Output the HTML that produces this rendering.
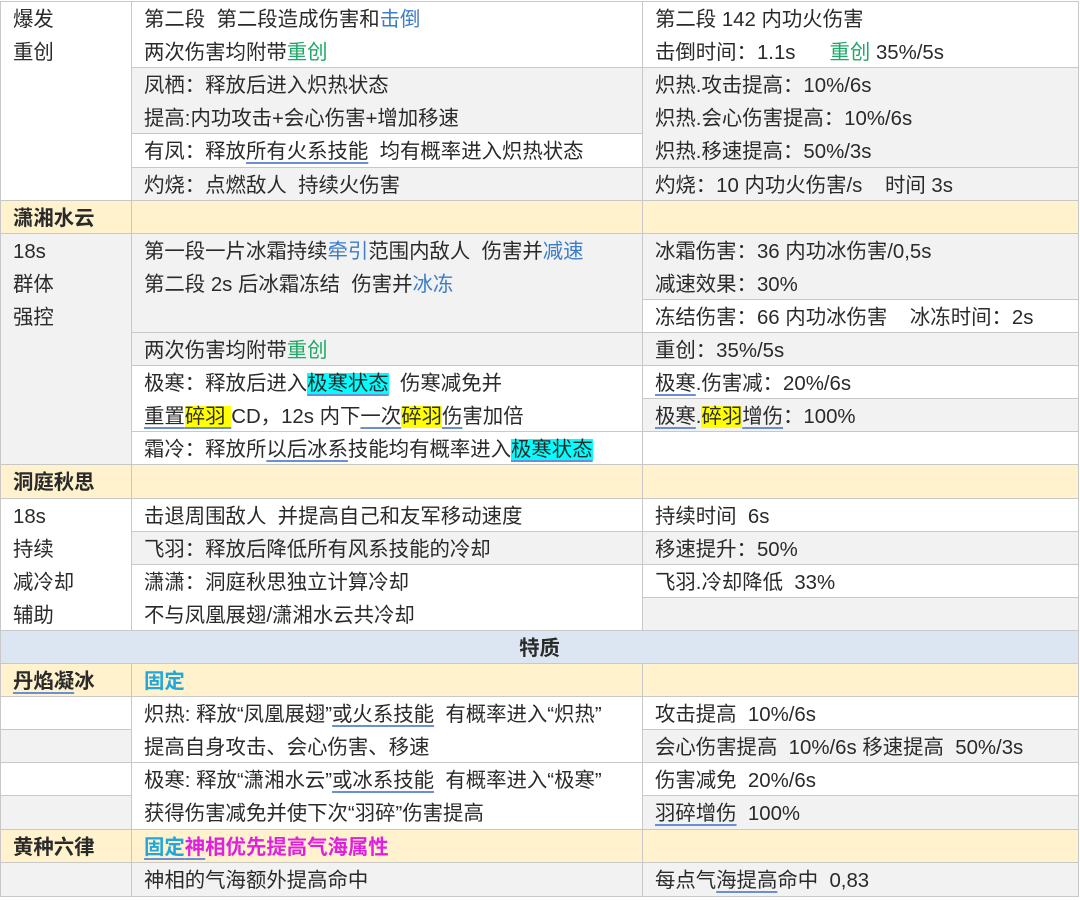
<!DOCTYPE html>
<html><head><meta charset="utf-8"><style>
body{margin:0;width:1080px;height:900px;background:#fff;position:relative;overflow:hidden;font-family:"Liberation Sans","Noto Sans CJK SC",sans-serif;font-size:20.4px;color:#2a2a2a}
.c{position:absolute;box-sizing:border-box;border-right:1px solid #c8c8c8;border-bottom:1px solid #c8c8c8;padding-left:12px;padding-top:2px;line-height:33px;white-space:nowrap;overflow:hidden}
.w{background:#fff}.g{background:#f2f2f2}.y{background:#fff2cc}.b{background:#dce6f2}
.c1{left:0;width:132px;border-left:1px solid #c8c8c8}
.c2{left:132px;width:511px}
.c3{left:643px;width:436px}
.bd{font-weight:bold}
.bl{color:#3d7cc9}.gr{color:#1fa866}
.u{text-decoration:underline;text-decoration-color:#6b8fd6;text-underline-offset:4px}
.cy{background:#00ffff}.ye{background:#ffff00}
.fx{color:#22a7dd;font-weight:bold}.mg{color:#e020e0;font-weight:bold}
</style></head><body>
<div style="position:absolute;left:0;top:1px;width:1079px;height:1px;background:#c8c8c8"></div>
<!-- col1 -->
<div class="c c1 w" style="top:2px;height:199px">爆发<br>重创</div>
<div class="c c1 y bd" style="top:201px;height:33px">潇湘水云</div>
<div class="c c1 g" style="top:234px;height:231px">18s<br>群体<br>强控</div>
<div class="c c1 y bd" style="top:465px;height:34px">洞庭秋思</div>
<div class="c c1 w" style="top:499px;height:132px">18s<br>持续<br>减冷却<br>辅助</div>
<div class="c b bd" style="left:0;width:1079px;border-left:1px solid #c8c8c8;top:631px;height:33px;text-align:center;padding-left:0">特质</div>
<div class="c c1 y bd" style="top:664px;height:33px"><span class="u">丹焰凝</span>冰</div>
<div class="c c1 w" style="top:697px;height:33px"></div>
<div class="c c1 g" style="top:730px;height:33px"></div>
<div class="c c1 w" style="top:763px;height:33px"></div>
<div class="c c1 g" style="top:796px;height:34px"></div>
<div class="c c1 y bd" style="top:830px;height:33px">黄种六律</div>
<div class="c c1 g" style="top:863px;height:34px"></div>
<!-- col2 -->
<div class="c c2 w" style="top:2px;height:66px">第二段&nbsp; 第二段造成伤害和<span class="bl">击倒</span><br>两次伤害均附带<span class="gr">重创</span></div>
<div class="c c2 g" style="top:68px;height:66px">凤栖：释放后进入炽热状态<br>提高:内功攻击+会心伤害+增加移速</div>
<div class="c c2 w" style="top:134px;height:34px">有凤：释放<span class="u">所有火系技能</span>&nbsp; 均有概率进入炽热状态</div>
<div class="c c2 g" style="top:168px;height:33px">灼烧：点燃敌人&nbsp; 持续火伤害</div>
<div class="c c2 y" style="top:201px;height:33px"></div>
<div class="c c2 g" style="top:234px;height:99px">第一段一片冰霜持续<span class="bl">牵引</span>范围内敌人&nbsp; 伤害并<span class="bl">减速</span><br>第二段 2s 后冰霜冻结&nbsp; 伤害并<span class="bl">冰冻</span></div>
<div class="c c2 g" style="top:333px;height:33px">两次伤害均附带<span class="gr">重创</span></div>
<div class="c c2 w" style="top:366px;height:66px">极寒：释放后进入<span class="cy u">极寒状态</span>&nbsp; 伤寒减免并<br><span class="u">重置<span class="ye">碎羽 </span></span>CD，12s 内下<span class="u">一次</span><span class="ye">碎羽</span><span class="u">伤</span>害加倍</div>
<div class="c c2 w" style="top:432px;height:33px">霜冷：释放所<span class="u">以后冰系</span>技能均有概率进入<span class="cy u">极寒状态</span></div>
<div class="c c2 y" style="top:465px;height:34px"></div>
<div class="c c2 w" style="top:499px;height:33px">击退周围敌人&nbsp; 并提高自己和友军移动速度</div>
<div class="c c2 g" style="top:532px;height:33px">飞羽：释放后降低所有风系技能的冷却</div>
<div class="c c2 w" style="top:565px;height:66px">潇潇：洞庭秋思独立计算冷却<br>不与凤凰展翅/潇湘水云共冷却</div>
<div class="c c2 y" style="top:664px;height:33px"><span class="fx">固定</span></div>
<div class="c c2 w" style="top:697px;height:66px">炽热: 释放“凤凰展翅”<span class="u">或火系技能</span>&nbsp; 有概率进入“炽热”<br>提高自身攻击、会心伤害、移速</div>
<div class="c c2 w" style="top:763px;height:67px">极寒: 释放“潇湘水云”<span class="u">或冰系技能</span>&nbsp; 有概率进入“极寒”<br>获得伤害减免并使下次“羽碎”伤害提高</div>
<div class="c c2 y" style="top:830px;height:33px"><span class="fx u">固定</span><span class="mg"><span class="u">神</span>相优先提高气海属性</span></div>
<div class="c c2 g" style="top:863px;height:34px">神相的气海额外提高命中</div>
<!-- col3 -->
<div class="c c3 w" style="top:2px;height:66px">第二段 142 内功火伤害<br>击倒时间：1.1s&nbsp;&nbsp;&nbsp;&nbsp;&nbsp; <span class="gr">重创</span> 35%/5s</div>
<div class="c c3 g" style="top:68px;height:100px">炽热.攻击提高：10%/6s<br>炽热.会心伤害提高：10%/6s<br>炽热.移速提高：50%/3s</div>
<div class="c c3 g" style="top:168px;height:33px">灼烧：10 内功火伤害/s&nbsp;&nbsp;&nbsp; 时间 3s</div>
<div class="c c3 y" style="top:201px;height:33px"></div>
<div class="c c3 g" style="top:234px;height:66px">冰霜伤害：36 内功冰伤害/0,5s<br>减速效果：30%</div>
<div class="c c3 w" style="top:300px;height:33px">冻结伤害：66 内功冰伤害&nbsp;&nbsp;&nbsp; 冰冻时间：2s</div>
<div class="c c3 g" style="top:333px;height:33px">重创：35%/5s</div>
<div class="c c3 w" style="top:366px;height:33px"><span class="u">极寒</span>.伤害减：20%/6s</div>
<div class="c c3 g" style="top:399px;height:33px"><span class="u">极寒</span>.<span class="ye">碎羽</span><span class="u">增伤</span>：100%</div>
<div class="c c3 w" style="top:432px;height:33px"></div>
<div class="c c3 y" style="top:465px;height:34px"></div>
<div class="c c3 w" style="top:499px;height:33px">持续时间&nbsp; 6s</div>
<div class="c c3 g" style="top:532px;height:33px">移速提升：50%</div>
<div class="c c3 w" style="top:565px;height:33px">飞羽.冷却降低&nbsp; 33%</div>
<div class="c c3 g" style="top:598px;height:33px"></div>
<div class="c c3 y" style="top:664px;height:33px"></div>
<div class="c c3 w" style="top:697px;height:33px">攻击提高&nbsp; 10%/6s</div>
<div class="c c3 g" style="top:730px;height:33px">会心伤害提高&nbsp; 10%/6s 移速提高&nbsp; 50%/3s</div>
<div class="c c3 w" style="top:763px;height:33px">伤害减免&nbsp; 20%/6s</div>
<div class="c c3 g" style="top:796px;height:34px"><span class="u">羽碎增伤</span>&nbsp; 100%</div>
<div class="c c3 y" style="top:830px;height:33px"></div>
<div class="c c3 g" style="top:863px;height:34px">每点气<span class="u">海提高</span>命中&nbsp; 0,83</div>
</body></html>
